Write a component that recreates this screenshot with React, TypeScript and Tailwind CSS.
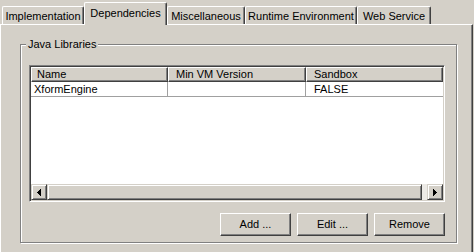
import React from "react";

const raisedBtn =
  "border border-t-[#d4d0c8] border-l-[#d4d0c8] border-r-[#404040] border-b-[#404040] shadow-[inset_1px_1px_0_#fff,inset_-1px_-1px_0_#808080] bg-[#d4d0c8]";

function Tab({ w, children, selected }: { w: string; children: React.ReactNode; selected?: boolean }) {
  return (
    <div
      className={
        w +
        " flex items-center justify-center border-t border-l border-white border-r border-r-[#404040] shadow-[inset_-1px_0_0_#808080] rounded-tl-[2px] rounded-tr-[2px] bg-[#d4d0c8] " +
        (selected ? "h-[23px] -mb-px relative z-10 pb-[2px]" : "h-[18px] pt-[1px]")
      }
    >
      <span className="leading-[13px] whitespace-nowrap">{children}</span>
    </div>
  );
}

function LeftArrow() {
  return (
    <svg width="4" height="7" viewBox="0 0 4 7">
      <path d="M3 0h1v7h-1z M2 1h1v5h-1z M1 2h1v3h-1z M0 3h1v1h-1z" fill="#000" />
    </svg>
  );
}

function RightArrow() {
  return (
    <svg width="4" height="7" viewBox="0 0 4 7">
      <path d="M0 0h1v7h-1z M1 1h1v5h-1z M2 2h1v3h-1z M3 3h1v1h-1z" fill="#000" />
    </svg>
  );
}

function PushButton({ children }: { children: React.ReactNode }) {
  return (
    <div className="w-[71px] h-[23px] flex items-center justify-center border border-t-white border-l-white border-r-[#404040] border-b-[#404040] shadow-[inset_-1px_-1px_0_#808080] bg-[#d4d0c8]">
      <span className="leading-[13px]">{children}</span>
    </div>
  );
}

export default function App() {
  return (
    <div className="w-[474px] h-[252px] bg-[#d4d0c8] overflow-hidden text-[11px] text-black font-['Liberation_Sans',Arial,sans-serif]">
      <div className="flex items-end h-[24px] pl-[2px]">
        <Tab w="w-[82px]">Implementation</Tab>
        <Tab w="w-[83px]" selected>
          Dependencies
        </Tab>
        <Tab w="w-[78px]">Miscellaneous</Tab>
        <Tab w="w-[112px]">Runtime Environment</Tab>
        <Tab w="w-[74px]">Web Service</Tab>
      </div>
      <div className="w-[473px] h-[240px] border-t border-l border-white border-r border-r-[#404040] shadow-[inset_-1px_0_0_#808080] pl-[19px] pt-[19px]">
        <div className="relative w-[437px] h-[199px] border border-[#808080] shadow-[inset_1px_1px_0_#fff,1px_1px_0_#fff] pl-[8px] pt-[20px]">
          <span className="absolute left-[5px] top-[-8px] bg-[#d4d0c8] px-[2px] leading-[14px]">Java Libraries</span>
          <div className="w-[416px] h-[137px] border border-t-[#808080] border-l-[#808080] border-b-white border-r-white shadow-[inset_1px_1px_0_#404040,inset_-1px_-1px_0_#d4d0c8] p-[1px]">
            <div className="h-full bg-white flex flex-col">
              <div className="flex h-[15px] shrink-0">
                <div className="w-[137px] border-t border-l border-white border-r border-b border-r-[#404040] border-b-[#404040] shadow-[inset_-1px_-1px_0_#808080] bg-[#d4d0c8] pl-[5px] leading-[12px]">
                  Name
                </div>
                <div className="w-[138px] border-t border-l border-white border-r border-b border-r-[#404040] border-b-[#404040] shadow-[inset_-1px_-1px_0_#808080] bg-[#d4d0c8] pl-[7px] leading-[12px]">
                  Min VM Version
                </div>
                <div className="flex-1 border-t border-l border-white border-r border-b border-r-[#404040] border-b-[#404040] shadow-[inset_-1px_-1px_0_#808080] bg-[#d4d0c8] pl-[7px] leading-[12px]">
                  Sandbox
                </div>
              </div>
              <div className="flex h-[15px] shrink-0">
                <div className="w-[137px] border-b border-r border-[#a0a0a0] pl-[3px] leading-[14px]">XformEngine</div>
                <div className="w-[138px] border-b border-r border-[#a0a0a0] leading-[14px]"></div>
                <div className="flex-1 border-b border-[#a0a0a0] pl-[8px] leading-[14px]">FALSE</div>
              </div>
              <div className="flex-1"></div>
              <div className="flex h-[16px] shrink-0 bg-[#eceae6]">
                <div className={"w-[16px] h-[16px] flex items-center justify-center " + raisedBtn}>
                  <LeftArrow />
                </div>
                <div className={"w-[375px] h-[16px] " + raisedBtn}></div>
                <div className="flex-1"></div>
                <div className={"w-[16px] h-[16px] flex items-center justify-center " + raisedBtn}>
                  <RightArrow />
                </div>
              </div>
            </div>
          </div>
          <div className="flex justify-end gap-[6px] mt-[11px] w-[416px]">
            <PushButton>Add ...</PushButton>
            <PushButton>Edit ...</PushButton>
            <PushButton>Remove</PushButton>
          </div>
        </div>
      </div>
    </div>
  );
}
